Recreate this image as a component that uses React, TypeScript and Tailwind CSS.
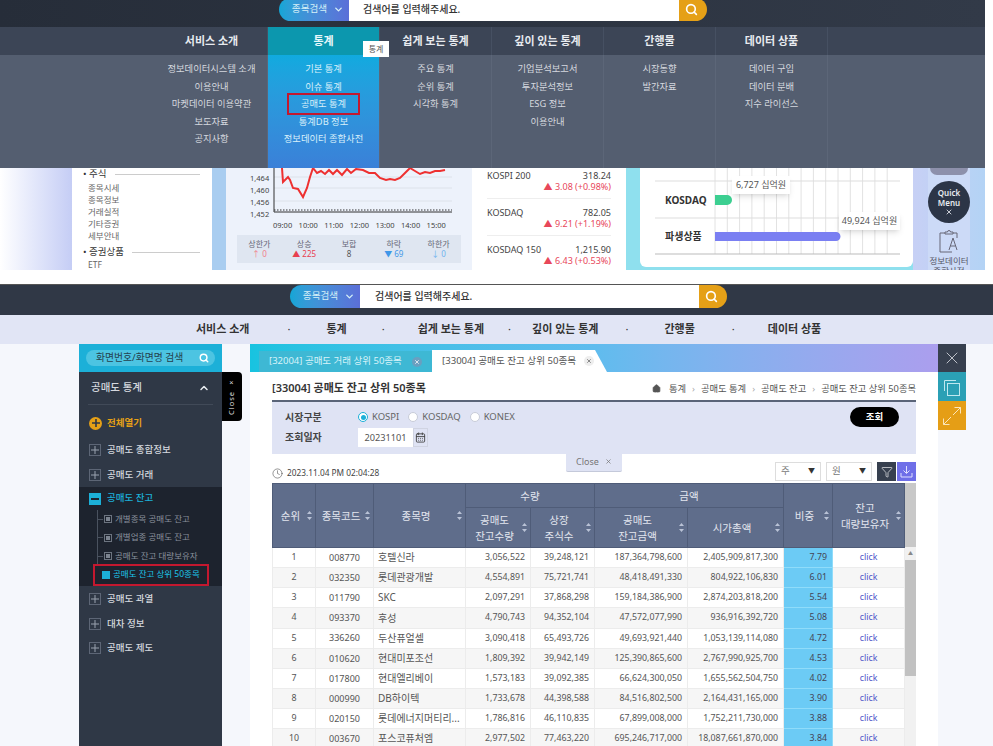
import { ChevronDown, ChevronUp, CalendarDays, Clock, Filter, Home, Search, X } from 'lucide-react';

const topMenu = [
  { title: '서비스 소개', items: ['정보데이터시스템 소개', '이용안내', '마켓데이터 이용약관', '보도자료', '공지사항'] },
  { title: '통계', items: ['기본 통계', '이슈 통계', '공매도 통계', '통계DB 정보', '정보데이터 종합사전'] },
  { title: '쉽게 보는 통계', items: ['주요 통계', '순위 통계', '시각화 통계'] },
  { title: '깊이 있는 통계', items: ['기업분석보고서', '투자분석정보', 'ESG 정보', '이용안내'] },
  { title: '간행물', items: ['시장동향', '발간자료'] },
  { title: '데이터 상품', items: ['데이터 구입', '데이터 분배', '지수 라이선스'] },
];

const rows = [
  ['1', '008770', '호텔신라', '3,056,522', '39,248,121', '187,364,798,600', '2,405,909,817,300', '7.79'],
  ['2', '032350', '롯데관광개발', '4,554,891', '75,721,741', '48,418,491,330', '804,922,106,830', '6.01'],
  ['3', '011790', 'SKC', '2,097,291', '37,868,298', '159,184,386,900', '2,874,203,818,200', '5.54'],
  ['4', '093370', '후성', '4,790,743', '94,352,104', '47,572,077,990', '936,916,392,720', '5.08'],
  ['5', '336260', '두산퓨얼셀', '3,090,418', '65,493,726', '49,693,921,440', '1,053,139,114,080', '4.72'],
  ['6', '010620', '현대미포조선', '1,809,392', '39,942,149', '125,390,865,600', '2,767,990,925,700', '4.53'],
  ['7', '017800', '현대엘리베이', '1,573,183', '39,092,385', '66,624,300,050', '1,655,562,504,750', '4.02'],
  ['8', '000990', 'DB하이텍', '1,733,678', '44,398,588', '84,516,802,500', '2,164,431,165,000', '3.90'],
  ['9', '020150', '롯데에너지머티리...', '1,786,816', '46,110,835', '67,899,008,000', '1,752,211,730,000', '3.88'],
  ['10', '003670', '포스코퓨처엠', '2,977,502', '77,463,220', '695,246,717,000', '18,087,661,870,000', '3.84'],
];

const SearchBar = ({ inputClass }: { inputClass: string }) => (
  <div className="flex h-[23px] items-stretch">
    <div className="flex w-[70px] items-center justify-center gap-1.5 rounded-l-full bg-gradient-to-r from-[#12a6d6] to-[#5b6fd8] pl-2 text-[9.6px] text-[#d5f0f7]">
      종목검색
      <ChevronDown size={11} strokeWidth={3} />
    </div>
    <div className={`flex items-center bg-white text-[10px] font-medium text-[#333] ${inputClass}`}>
      검색어를 입력해주세요.
    </div>
    <div className="flex w-[28px] items-center justify-center rounded-r-full bg-[#e5a017] pr-1 text-white">
      <Search size={13} strokeWidth={3} />
    </div>
  </div>
);

const SortArrows = () => (
  <svg width="5" height="9" viewBox="0 0 5 9" className="inline-block shrink-0 text-[#b9c2d6]">
    <path d="M2.5 0 5 3H0zM2.5 9 0 6h5z" fill="currentColor" />
  </svg>
);

const TopMenu = () => (
  <div className="relative">
    <div className="flex h-[28px] bg-[#3c4556] pl-[156px]">
      {topMenu.map((menu, i) => (
        <div
          key={menu.title}
          className={`flex w-[112px] items-center justify-center border-r border-[#465062] text-[11px] font-bold ${i === 1 ? 'bg-[#0c97ae] text-[#e8f8fb]' : 'text-[#e8ebf0]'}`}
        >
          {menu.title}
        </div>
      ))}
    </div>
    <div className="flex h-[113px] bg-[#545e70] pl-[156px]">
      {topMenu.map((menu, i) => (
        <div
          key={menu.title}
          className={`flex w-[112px] flex-col items-center gap-[2.6px] border-r border-[#5c6678] pt-[6px] text-[9.3px] leading-[15px] ${i === 1 ? 'bg-gradient-to-b from-[#10aadf] to-[#3a80d8] text-[#d8f0fa]' : 'text-[#d4d8df]'}`}
        >
          {menu.items.map((item) => (
            <div
              key={item}
              className={item === '공매도 통계' ? 'flex h-[22px] w-[73px] -my-[3.5px] items-center justify-center border-2 border-[#c3182f]' : ''}
            >
              {item}
            </div>
          ))}
        </div>
      ))}
    </div>
    <div className="absolute left-[363px] top-[14px] flex h-[16px] w-[26px] items-center justify-center bg-white text-[8px] text-[#555]">
      통계
    </div>
  </div>
);

const LeftList = () => (
  <div className="w-[140px] bg-white pl-[11px] pr-[12px] text-[8.5px] leading-[12px] text-[#666]">
    <div className="flex items-center gap-2 text-[#333]">
      <span className="text-[9.5px]">• 주식</span>
      <span className="h-px flex-1 bg-[#ccc]" />
    </div>
    <div className="mt-[2px] pl-[5px]">종목시세</div>
    <div className="pl-[5px]">종목정보</div>
    <div className="pl-[5px]">거래실적</div>
    <div className="pl-[5px]">기타증권</div>
    <div className="pl-[5px]">세부안내</div>
    <div className="mt-[4px] flex items-center gap-2 text-[#333]">
      <span className="text-[9.5px]">• 증권상품</span>
      <span className="h-px flex-1 bg-[#ccc]" />
    </div>
    <div className="mt-px pl-[5px]">ETF</div>
  </div>
);

const stats = [
  { label: '상한가', value: '↑ 0', color: 'text-[#f0808c]' },
  { label: '상승', value: '▲ 225', color: 'text-[#e8404f]' },
  { label: '보합', value: '8', color: 'text-[#555]' },
  { label: '하락', value: '▼ 69', color: 'text-[#3f97e8]' },
  { label: '하한가', value: '↓ 0', color: 'text-[#6fb2ee]' },
];

const IndexChart = () => (
  <div className="flex w-[246px] flex-col bg-[#edf2fb] pb-[3px]">
    <svg width="246" height="67" viewBox="0 0 246 67" className="shrink-0">
      {[9, 20, 33].map((y) => (
        <line key={y} x1="48" x2="226" y1={y} y2={y} stroke="#dde2ea" />
      ))}
      <line x1="48" x2="48" y1="0" y2="44" stroke="#333" />
      <line x1="48" x2="226" y1="44" y2="44" stroke="#333" />
      <line x1="48" x2="226" y1="42" y2="42" stroke="#333" strokeDasharray="1.5 1.5" />
      <polyline
        fill="none"
        stroke="#ee3030"
        strokeWidth="2"
        points="56,0 57,14 62,9 64,12 67,20 72,21 77,29 81,20 84,9 87,0 91,5 95,3 99,6 103,2 107,6 111,2 116,7 121,1 125,5 130,1 137,2 143,5 149,5 154,10 160,12 164,11 169,12 174,10 179,5 184,0 189,3 194,6 199,4 204,5 209,3 214,3 219,2"
      />
      {[['1,464', 14], ['1,460', 26], ['1,456', 38], ['1,452', 50]].map(([t, y]) => (
        <text key={t} x="24" y={Number(y) - 1} fontSize="7.5" fill="#444">{t}</text>
      ))}
      {['09:00', '10:00', '11:00', '12:00', '13:00', '14:00', '15:00'].map((t, i) => (
        <text key={t} x={47 + i * 25.6} y="60" fontSize="7.5" fill="#444">{t}</text>
      ))}
    </svg>
    <div className="ml-[11px] grid h-[28px] w-[224px] grid-cols-5 bg-[#dfe6f1] text-center text-[8px] leading-[10px]">
      {stats.map((s) => (
        <div key={s.label} className="flex flex-col justify-center text-[#667]">
          {s.label}
          <span className={s.color}>{s.value}</span>
        </div>
      ))}
    </div>
  </div>
);

const IndexList = () => (
  <div className="w-[154px] bg-white px-[15px] pt-[2px] text-[9px]">
    {[
      ['KOSPI 200', '318.24', '▲ 3.08 (+0.98%)'],
      ['KOSDAQ', '782.05', '▲ 9.21 (+1.19%)'],
      ['KOSDAQ 150', '1,215.90', '▲ 6.43 (+0.53%)'],
    ].map(([name, price, diff], i) => (
      <div key={name} className={`mb-[8px] flex h-[29px] justify-between leading-[11px] text-[#444] ${i < 2 ? 'border-b border-[#eee]' : ''}`}>
        <span>{name}</span>
        <div className="text-right">
          {price}
          <div className="text-[#e8475a]">{diff}</div>
        </div>
      </div>
    ))}
  </div>
);

const BarCard = () => (
  <div className="w-[287px] bg-[#8fe0ee] pb-[3px] pl-[14px]">
    <div className="relative h-full w-[273px] overflow-hidden rounded-b-[6px] bg-white">
      <svg width="273" height="99" viewBox="0 0 273 99">
        {Array.from({ length: 15 }, (_, i) => (
          <line key={i} x1={75 + i * 12.3} x2={75 + i * 12.3} y1="0" y2="86" stroke="#e2e2e2" />
        ))}
        <line x1="15" x2="260" y1="13" y2="13" stroke="#ddd" />
        <line x1="15" x2="260" y1="50" y2="50" stroke="#ddd" />
        <line x1="15" x2="260" y1="86" y2="86" stroke="#bbb" />
        <path d="M75 27h12a5 5 0 0 1 0 10H75z" fill="#3ccf91" />
        <path d="M75 64h121a4.500 4.500 0 0 1 0 9H75z" fill="#7a7ff2" />
        <text x="25" y="36" fontSize="10" fontWeight="700" fill="#333">KOSDAQ</text>
        <text x="25" y="72" fontSize="10" fontWeight="700" fill="#333">파생상품</text>
      </svg>
      <div className="absolute left-[92px] top-[8px] flex h-[18px] w-[58px] items-center justify-center bg-white text-[9px] text-[#555] shadow-md">
        6,727 십억원
      </div>
      <div className="absolute left-[199px] top-[44px] flex h-[18px] w-[61px] items-center justify-center bg-white text-[9px] text-[#555] shadow-md">
        49,924 십억원
      </div>
    </div>
  </div>
);

const QuickStrip = () => (
  <div className="flex w-[72px] justify-center bg-gradient-to-r from-[#c7d0f5] to-[#b3d3f5]">
    <div className="flex w-[42px] flex-col items-center overflow-hidden bg-[#ccdaf7]">
      <div className="h-[7px] w-[38px] shrink-0 rounded-b-full bg-[#8d90ab]" />
      <div className="mt-[6px] flex h-[42px] w-[42px] shrink-0 flex-col items-center justify-center rounded-full bg-[#2c3547] text-[8px] font-semibold leading-[10px] text-[#e8ebf0]">
        Quick
        <span>Menu</span>
        <X size={8} strokeWidth={2.5} />
      </div>
      <svg width="22" height="23" viewBox="0 0 22 23" className="mt-[7px] shrink-0 text-[#667]" fill="none" stroke="currentColor">
        <path d="M7 3H2v19h12M15 3h4v5" />
        <path d="M7 4V2h2.500a1.500 1.500 0 0 1 3 0H15v2z" />
        <path d="M11 20 15 8l4 12M12.500 16h5" />
      </svg>
      <div className="mt-[3px] shrink-0 whitespace-nowrap text-center text-[8.5px] leading-[10px] text-[#556]">
        정보데이터
        <br />
        종합사전
      </div>
    </div>
  </div>
);

const TopShot = () => (
  <div className="h-[270px] w-[985px] overflow-hidden">
    <div className="h-[27px] bg-gradient-to-r from-[#262d39] to-[#323a48] pl-[279px]">
      <div className="h-[21px] overflow-hidden">
        <div className="-mt-[2px]"><SearchBar inputClass="w-[330px] pl-[14px]" /></div>
      </div>
    </div>
    <TopMenu />
    <div className="flex h-[102px]">
      <div className="w-[72px] bg-gradient-to-r from-white to-[#c5cdf5]" />
      <LeftList />
      <div className="w-[14px] bg-[#a9cdf0]" />
      <IndexChart />
      <IndexList />
      <BarCard />
      <QuickStrip />
    </div>
  </div>
);

const NavRow = () => (
  <div className="flex h-[29px] items-center bg-[#e1e5f5] text-[11px] font-bold text-[#333]">
    <span className="ml-[196px]">서비스 소개</span>
    <span className="ml-[38px] font-normal">·</span>
    <span className="ml-[36px]">통계</span>
    <span className="ml-[35px] font-normal">·</span>
    <span className="ml-[33px]">쉽게 보는 통계</span>
    <span className="ml-[24px] font-normal">·</span>
    <span className="ml-[21px]">깊이 있는 통계</span>
    <span className="ml-[27px] font-normal">·</span>
    <span className="ml-[36px]">간행물</span>
    <span className="ml-[37px] font-normal">·</span>
    <span className="ml-[33px]">데이터 상품</span>
  </div>
);

const PlusBox = () => (
  <span className="flex h-[12px] w-[12px] shrink-0 items-center justify-center border border-[#5d6676] text-[#9aa2af]">
    <svg width="8" height="8" viewBox="0 0 8 8" stroke="currentColor"><path d="M4 0v8M0 4h8" /></svg>
  </span>
);

const SideItem = ({ label }: { label: string }) => (
  <div className="flex h-[24.500px] items-center gap-[6px] pl-[10px] text-[9.5px] font-medium text-[#d5d8de]">
    <PlusBox />
    {label}
  </div>
);

const SubItem = ({ label }: { label: string }) => (
  <div className="flex h-[18.500px] items-center text-[8.5px] text-[#8a919d]">
    <span className="h-px w-[5px] shrink-0 bg-[#4a525f]" />
    <span className="ml-px mr-[3px] flex h-[8px] w-[8px] shrink-0 items-center justify-center border border-[#6c7480]">
      <span className="h-[4px] w-[4px] bg-[#7c8490]" />
    </span>
    {label}
  </div>
);

const Sidebar = () => (
  <div className="flex w-[143px] shrink-0 flex-col">
    <div className="flex h-[28px] items-center bg-[#1cb0d8] px-[7px]">
      <div className="flex h-[16px] w-full items-center justify-between rounded-full bg-[#4cc4e2] pl-[10px] pr-[6px] text-[9.8px] text-[#25414d]">
        화면번호/화면명 검색
        <Search size={10} strokeWidth={3.5} className="text-white" />
      </div>
    </div>
    <div className="flex-1 bg-[#2f3846]">
      <div className="mx-[9px] flex h-[33px] items-center justify-between border-b border-[#414a58] pl-[3px] pr-[3px] text-[10.5px] font-medium text-[#d5d8de]">
        공매도 통계
        <ChevronUp size={12} strokeWidth={3} className="text-[#e8ebf0]" />
      </div>
      <div className="flex h-[33px] items-center gap-[5px] pl-[10px] pt-[3px] text-[9.5px] font-bold text-[#e5a017]">
        <span className="flex h-[13px] w-[13px] items-center justify-center rounded-full bg-[#e5a017] text-[#2f3846]">
          <svg width="8" height="8" viewBox="0 0 8 8" stroke="currentColor" strokeWidth="1.6"><path d="M4 0v8M0 4h8" /></svg>
        </span>
        전체열기
      </div>
      <SideItem label="공매도 종합정보" />
      <SideItem label="공매도 거래" />
      <div className="h-[99px] bg-[#1d232e]">
        <div className="flex h-[23px] items-center gap-[6px] pl-[10px] text-[9.5px] font-medium text-[#1cb0d8]">
          <span className="flex h-[12px] w-[12px] items-center justify-center bg-[#1cb0d8]">
            <span className="h-[2px] w-[8px] bg-[#1d232e]" />
          </span>
          공매도 잔고
        </div>
        <div className="ml-[18px] border-l border-[#4a525f]">
          <SubItem label="개별종목 공매도 잔고" />
          <SubItem label="개별업종 공매도 잔고" />
          <SubItem label="공매도 잔고 대량보유자" />
        </div>
        <div className="-mt-[2px] ml-[14px] flex h-[22px] w-[116px] items-center gap-[3px] border-2 border-[#c3182f] pl-[7px] text-[8.5px] text-[#1cc4e8]">
          <span className="h-[8px] w-[8px] shrink-0 bg-[#1cb0d8]" />
          공매도 잔고 상위 50종목
        </div>
      </div>
      <div className="mt-px">
        <SideItem label="공매도 과열" />
        <SideItem label="대차 정보" />
        <SideItem label="공매도 제도" />
      </div>
    </div>
  </div>
);

const Tabs = () => (
  <div className="flex h-[28px] items-end bg-gradient-to-r from-[#17c3e0] via-[#5fbcee] to-[#ab9eee] pl-[9px]">
    <div className="flex h-[21px] w-[173px] items-center justify-between bg-[#3eb8d4] pl-[10px] pr-[10px] text-[9.5px] text-[#d8f3f9]">
      [32004] 공매도 거래 상위 50종목
      <span className="flex h-[10px] w-[10px] items-center justify-center rounded-full bg-[#6a9fc0] text-white">
        <X size={6} strokeWidth={3} />
      </span>
    </div>
    <div className="flex h-[22px] w-[175px] items-center gap-[8px] bg-white pl-[10px] text-[9.6px] text-[#555] [clip-path:polygon(0_0,163px_0,100%_100%,0_100%)]">
      [33004] 공매도 잔고 상위 50종목
      <span className="flex h-[10px] w-[10px] items-center justify-center rounded-full bg-[#eee] text-[#666]">
        <X size={6} strokeWidth={3} />
      </span>
    </div>
  </div>
);

const Radio = ({ label, on }: { label: string; on?: boolean }) => (
  <span className="flex items-center gap-[4px]">
    <span className={`flex h-[10px] w-[10px] items-center justify-center rounded-full border bg-white ${on ? 'border-[#1cb0d8]' : 'border-[#c8ccd8]'}`}>
      {on && <span className="h-[5px] w-[5px] rounded-full bg-[#1cb0d8]" />}
    </span>
    {label}
  </span>
);

const UnitSelect = ({ label }: { label: string }) => (
  <div className="flex h-[19px] w-[46px] items-center justify-between border border-[#ddd] bg-white px-[5px] text-[9.5px] text-[#777]">
    {label}
    <span className="text-[7px] text-[#333]">▼</span>
  </div>
);

const thBase = 'border border-[#4f5c78] bg-[#5f6d8b] font-normal text-[#e3e6ef] text-[10.5px] leading-[16px] align-middle p-0';

const HeadCell = ({ children }: { children: React.ReactNode }) => (
  <div className="flex items-center justify-center gap-[2px] px-[3px]">
    <span className="flex-1 text-center">{children}</span>
    <SortArrows />
  </div>
);

const DataTable = () => (
  <div className="flex h-[263px] overflow-hidden">
    <table className="w-[632px] table-fixed border-collapse self-start text-[8.8px] text-[#555]">
      <colgroup>
        <col className="w-[43px]" />
        <col className="w-[58px]" />
        <col className="w-[92px]" />
        <col className="w-[65px]" />
        <col className="w-[64px]" />
        <col className="w-[93px]" />
        <col className="w-[96px]" />
        <col className="w-[49px]" />
        <col className="w-[72px]" />
      </colgroup>
      <thead>
        <tr className="h-[24px]">
          <th rowSpan={2} className={thBase}><HeadCell>순위</HeadCell></th>
          <th rowSpan={2} className={thBase}><HeadCell>종목코드</HeadCell></th>
          <th rowSpan={2} className={thBase}><HeadCell>종목명</HeadCell></th>
          <th colSpan={2} className={thBase}>수량</th>
          <th colSpan={2} className={thBase}>금액</th>
          <th rowSpan={2} className={thBase}><HeadCell>비중</HeadCell></th>
          <th rowSpan={2} className={thBase}><HeadCell>잔고<br />대량보유자</HeadCell></th>
        </tr>
        <tr className="h-[40px]">
          <th className={thBase}><HeadCell>공매도<br />잔고수량</HeadCell></th>
          <th className={thBase}><HeadCell>상장<br />주식수</HeadCell></th>
          <th className={thBase}><HeadCell>공매도<br />잔고금액</HeadCell></th>
          <th className={thBase}><HeadCell>시가총액</HeadCell></th>
        </tr>
      </thead>
      <tbody>
        {rows.map((row, i) => (
          <tr key={row[0]} className={`h-[20.170px] ${i % 2 ? 'bg-[#f6f6f6]' : 'bg-white'}`}>
            <td className="border border-[#ececec] p-0 text-center">{row[0]}</td>
            <td className="border border-[#ececec] p-0 text-center text-[9px]">{row[1]}</td>
            <td className="truncate border border-[#ececec] py-0 pl-[4px] pr-0 text-[10px]">{row[2]}</td>
            <td className="border border-[#ececec] py-0 pl-0 pr-[5px] text-right">{row[3]}</td>
            <td className="border border-[#ececec] py-0 pl-0 pr-[5px] text-right">{row[4]}</td>
            <td className="border border-[#ececec] py-0 pl-0 pr-[5px] text-right">{row[5]}</td>
            <td className="border border-[#ececec] py-0 pl-0 pr-[5px] text-right">{row[6]}</td>
            <td className="border border-[#8fdcfa] bg-[#6ccbf5] py-0 pl-0 pr-[5px] text-right text-[#445]">{row[7]}</td>
            <td className="border border-[#ececec] p-0 text-center text-[#4f55c8]">click</td>
          </tr>
        ))}
      </tbody>
    </table>
    <div className="flex w-[12px] flex-col bg-[#f1f1f1]">
      <div className="h-[64px] bg-[#c8c8c8]" />
      <div className="flex h-[13px] items-center justify-center text-[5px] text-[#888]">▲</div>
      <div className="h-[116px] bg-[#c1c1c1]" />
    </div>
  </div>
);

const MainPanel = () => (
  <div className="flex w-[688px] shrink-0 flex-col bg-white">
    <Tabs />
    <div className="flex flex-col pl-[22px] pr-[22px]">
      <div className="flex h-[28px] items-center justify-between pt-[5px]">
        <span className="text-[11px] font-semibold text-[#333]">[33004] 공매도 잔고 상위 50종목</span>
        <div className="flex items-center gap-[6px] text-[9.3px] text-[#555]">
          <Home size={9} fill="currentColor" className="mr-[2px]" />
          <span>통계</span>
          <span className="text-[#aaa]">›</span>
          <span>공매도 통계</span>
          <span className="text-[#aaa]">›</span>
          <span>공매도 잔고</span>
          <span className="text-[#aaa]">›</span>
          <span>공매도 잔고 상위 50종목</span>
        </div>
      </div>
      <div className="relative h-[54px] border-t-2 border-[#5a6478] bg-[#dfe3f4] pl-[13px] text-[10px] text-[#444]">
        <div className="flex h-[30px] items-center">
          <span className="w-[73px] font-semibold">시장구분</span>
          <div className="flex gap-[9px] text-[9.5px] text-[#666]">
            <Radio label="KOSPI" on />
            <Radio label="KOSDAQ" />
            <Radio label="KONEX" />
          </div>
        </div>
        <div className="-mt-[4px] flex h-[19px] items-center">
          <span className="w-[73px] font-semibold">조회일자</span>
          <div className="flex h-[19px] w-[55px] items-center justify-center bg-white text-[9.2px] text-[#555]">20231101</div>
          <div className="flex h-[19px] w-[15px] items-center justify-center border border-[#d0d4e2] text-[#444]">
            <CalendarDays size={11} />
          </div>
        </div>
        <div className="absolute right-[17px] top-[5px] flex h-[20px] w-[49px] items-center justify-center rounded-full bg-black text-[9.500px] font-bold text-white">
          조회
        </div>
        <div className="absolute left-[294px] top-[50px] z-10 flex h-[20px] w-[56px] items-center justify-center gap-[6px] rounded-b-[2px] border-b border-[#c4c9da] bg-[#dfe3f4] text-[9px] text-[#777]">
          Close
          <X size={7} strokeWidth={2.5} />
        </div>
      </div>
      <div className="flex h-[29px] items-center justify-between pb-[1px] pt-[7px]">
        <div className="flex items-center gap-[4px] pt-[4px] text-[8.3px] text-[#444]">
          <Clock size={11} strokeWidth={1.2} />
          2023.11.04 PM 02:04:28
        </div>
        <div className="flex items-center">
          <UnitSelect label="주" />
          <span className="ml-[5px]"><UnitSelect label="원" /></span>
          <div className="ml-[5px] flex h-[19px] w-[19px] items-center justify-center bg-[#37404f] text-white">
            <Filter size={12} strokeWidth={1.3} />
          </div>
          <div className="ml-px flex h-[19px] w-[19px] items-center justify-center bg-[#6f6fe8] text-[#e0e0ff]">
            <svg width="13" height="13" viewBox="0 0 13 13" fill="none" stroke="currentColor">
              <path d="M6.500 1v7M3.500 5.500l3 3 3-3M1 8v4h11V8" />
            </svg>
          </div>
        </div>
      </div>
      <DataTable />
    </div>
  </div>
);

const SideButtons = () => (
  <div className="w-[28px] shrink-0">
    <div className="flex h-[28px] items-center justify-center bg-[#37404f] text-[#d8dbe2]">
      <X size={20} strokeWidth={1} />
    </div>
    <div className="flex h-[29px] items-center justify-center bg-[#2ba0b5] text-[#bfe8ef]">
      <svg width="18" height="18" viewBox="0 0 18 18" fill="none" stroke="currentColor">
        <path d="M13 2.500H1.500V13" />
        <rect x="4.500" y="5.500" width="12" height="12" />
      </svg>
    </div>
    <div className="flex h-[29px] items-center justify-center bg-[#e59e16] text-[#fbe5b8]">
      <svg width="20" height="20" viewBox="0 0 20 20" fill="none" stroke="currentColor">
        <path d="M11 9 18.500 1.500M12.500 1.500h6v6M9 11 1.500 18.500M1.500 12.500v6h6" />
      </svg>
    </div>
  </div>
);

const BottomShot = () => (
  <div className="flex h-[462px] flex-col overflow-hidden border-t border-[#555]">
    <div className="h-[30px] bg-[#303846] pl-[290px]">
      <SearchBar inputClass="w-[339px] pl-[15px]" />
    </div>
    <NavRow />
    <div className="relative flex flex-1 bg-[#f5f7fc] pl-[79px]">
      <Sidebar />
      <div className="absolute left-[222px] top-[28px] flex h-[49px] w-[20px] items-center justify-center rounded-l-[4px] bg-black text-[7.500px] tracking-[1px] text-[#ddd] [writing-mode:vertical-rl] rotate-180">
        Close ×
      </div>
      <div className="w-[28px] shrink-0" />
      <MainPanel />
      <SideButtons />
    </div>
  </div>
);

export default function App() {
  return (
    <div className="h-[746px] w-[993px] overflow-hidden bg-white font-['Noto_Sans','Noto_Sans_CJK_KR',sans-serif]">
      <TopShot />
      <div className="h-[14px]" />
      <BottomShot />
    </div>
  );
}
